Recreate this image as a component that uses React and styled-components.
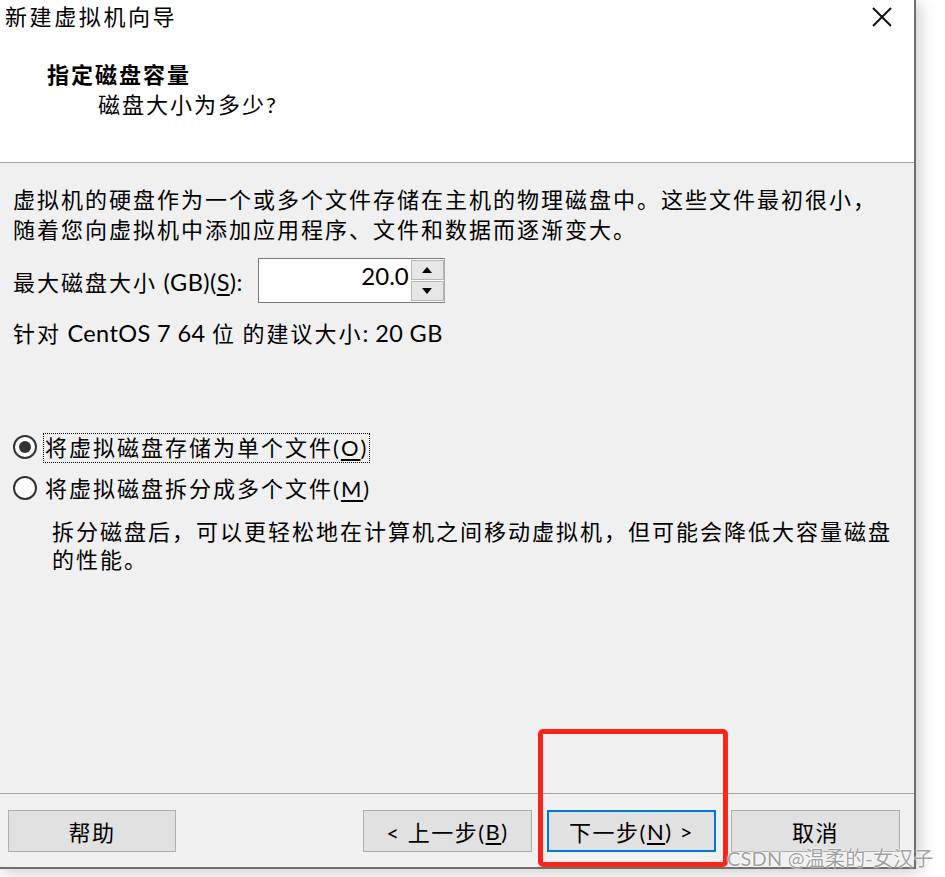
import React from 'react';
import styled, { createGlobalStyle } from 'styled-components';

const GlobalStyle = createGlobalStyle`
  html, body {
    margin: 0;
    padding: 0;
    background: #fff;
  }
  body {
    font-family: "Lato", "Noto Sans CJK SC", sans-serif;
  }
`;

const Page = styled.div`
  position: relative;
  width: 945px;
  height: 877px;
  overflow: hidden;
  background: #fff;
`;

const Window = styled.div`
  width: 914px;
  height: 867px;
  display: flex;
  flex-direction: column;
  border-right: 2px solid #6e6e6e;
  border-bottom: 2px solid #6e6e6e;
  box-shadow: 3px 3px 16px rgba(0, 0, 0, 0.22);
  font-size: 22px;
  letter-spacing: 2px;
  color: #000;
`;

const Top = styled.div`
  height: 162px;
  background: #fff;
  border-bottom: 1px solid #a0a0a0;
  display: flex;
  flex-direction: column;
`;

const TitleBar = styled.div`
  height: 33px;
  display: flex;
  align-items: center;
  justify-content: space-between;
  padding: 0 21px 0 5px;
  line-height: 33px;
  letter-spacing: 2.6px;
`;

const CloseIcon = styled.svg`
  width: 22px;
  height: 22px;
  display: block;
`;

const Header = styled.div`
  padding: 27px 0 0 47px;
  line-height: 30px;
`;

const HeaderTitle = styled.div`
  font-weight: 700;
`;

const HeaderSub = styled.div`
  padding-left: 51px;
`;

const Body = styled.div`
  flex: 1;
  background: #f0f0f0;
  padding: 22px 13px 0 13px;
`;

const Paragraph = styled.p`
  margin: 0;
  line-height: 30px;
`;

const Latin = styled.span`
  font-size: 23.5px;
  letter-spacing: 0.4px;
`;

const SizeRow = styled.div`
  display: flex;
  align-items: center;
  gap: 15px;
  height: 45px;
  margin-top: 13px;
`;

const SpinBox = styled.div`
  display: flex;
  width: 187px;
  height: 45px;
  box-sizing: border-box;
  border: 1px solid #7a7a7a;
  border-right-color: #adadad;
  background: #fff;
`;

const SpinField = styled.div`
  flex: 1;
  text-align: right;
  padding-right: 2px;
  font-size: 24px;
  letter-spacing: 0;
  line-height: 34px;
`;

const SpinButtons = styled.div`
  width: 33px;
  display: flex;
  flex-direction: column;
  gap: 1px;
  padding: 1px 0;
`;

const SpinButton = styled.div`
  flex: 1;
  background: #e6e6e6;
  border: 1px solid #b4b4b4;
  display: flex;
  align-items: center;
  justify-content: center;
`;

const Arrow = styled.svg`
  width: 10px;
  height: 6px;
  display: block;
`;

const Recommend = styled.div`
  margin-top: 15px;
  line-height: 30px;
`;

const RadioGroup = styled.div`
  margin-top: 84px;
  display: flex;
  flex-direction: column;
  gap: 11px;
`;

const RadioRow = styled.div`
  display: flex;
  align-items: center;
  height: 30px;
`;

const RadioCircle = styled.span`
  width: 24px;
  height: 24px;
  box-sizing: border-box;
  border: 2.5px solid #333;
  border-radius: 50%;
  background: #fff;
  display: flex;
  align-items: center;
  justify-content: center;
  margin-right: 6px;
  margin-top: -3px;

  &::after {
    content: '';
    width: 12px;
    height: 12px;
    border-radius: 50%;
    background: ${p => (p.checked ? '#333' : 'transparent')};
  }
`;

const RadioLabel = styled.span`
  line-height: 28px;
  padding: 0 1px;
  border: 1px dotted ${p => (p.focused ? '#000' : 'transparent')};
`;

const Description = styled.div`
  margin-top: 14px;
  padding-left: 39px;
  line-height: 28px;
`;

const U = styled.span`
  text-decoration: underline;
  text-underline-offset: 3px;
`;

const Footer = styled.div`
  height: 57px;
  border-top: 1px solid #a0a0a0;
  background: #f0f0f0;
  display: flex;
  padding: 16px 14px 0 8px;
  gap: 15px;
`;

const Spacer = styled.div`
  flex: 1;
`;

const Button = styled.div`
  width: ${p => p.width || 169}px;
  height: 42px;
  box-sizing: border-box;
  background: #e1e1e1;
  border: ${p => (p.primary ? '2px solid #0078d7' : '1px solid #adadad')};
  display: flex;
  align-items: center;
  justify-content: center;
  font-size: 22px;
  letter-spacing: 1.5px;
`;

const Highlight = styled.div`
  position: absolute;
  left: 538px;
  top: 729px;
  width: 190px;
  height: 138px;
  box-sizing: border-box;
  border: 5px solid #ff2419;
  border-radius: 5px;
`;

const Watermark = styled.div`
  position: absolute;
  left: 727px;
  top: 843px;
  font-size: 20px;
  letter-spacing: 0.2px;
  color: rgba(130, 130, 130, 0.75);
  text-shadow: 0 0 2px #fff, 0 0 2px #fff;
  white-space: nowrap;
`;

export default function App() {
  return (
    <Page>
      <GlobalStyle />
      <Window>
        <Top>
          <TitleBar>
            <span>新建虚拟机向导</span>
            <CloseIcon viewBox="0 0 22 22">
              <path d="M2 2 L20 20 M20 2 L2 20" stroke="#111" strokeWidth="2" />
            </CloseIcon>
          </TitleBar>
          <Header>
            <HeaderTitle>指定磁盘容量</HeaderTitle>
            <HeaderSub>磁盘大小为多少?</HeaderSub>
          </Header>
        </Top>

        <Body>
          <Paragraph>
            虚拟机的硬盘作为一个或多个文件存储在主机的物理磁盘中。这些文件最初很小，
            <br />
            随着您向虚拟机中添加应用程序、文件和数据而逐渐变大。
          </Paragraph>

          <SizeRow>
            <span>
              最大磁盘大小<Latin> (GB)(<U>S</U>):</Latin>
            </span>
            <SpinBox>
              <SpinField>20.0</SpinField>
              <SpinButtons>
                <SpinButton>
                  <Arrow viewBox="0 0 10 6">
                    <path d="M0 6 L5 0 L10 6 Z" fill="#000" />
                  </Arrow>
                </SpinButton>
                <SpinButton>
                  <Arrow viewBox="0 0 10 6">
                    <path d="M0 0 L10 0 L5 6 Z" fill="#000" />
                  </Arrow>
                </SpinButton>
              </SpinButtons>
            </SpinBox>
          </SizeRow>

          <Recommend>
            针对<Latin> CentOS 7 64 </Latin>位<Latin> </Latin>的建议大小<Latin>: 20 GB</Latin>
          </Recommend>

          <RadioGroup>
            <RadioRow>
              <RadioCircle checked />
              <RadioLabel focused>
                将虚拟磁盘存储为单个文件(<U>O</U>)
              </RadioLabel>
            </RadioRow>
            <RadioRow>
              <RadioCircle />
              <RadioLabel>
                将虚拟磁盘拆分成多个文件(<U>M</U>)
              </RadioLabel>
            </RadioRow>
          </RadioGroup>

          <Description>
            拆分磁盘后，可以更轻松地在计算机之间移动虚拟机，但可能会降低大容量磁盘
            <br />
            的性能。
          </Description>
        </Body>

        <Footer>
          <Button width={168}>帮助</Button>
          <Spacer />
          <Button>
            &lt; 上一步(<U>B</U>)
          </Button>
          <Button primary>
            下一步(<U>N</U>) &gt;
          </Button>
          <Button>取消</Button>
        </Footer>
      </Window>

      <Highlight />
      <Watermark>CSDN @温柔的-女汉子</Watermark>
    </Page>
  );
}
